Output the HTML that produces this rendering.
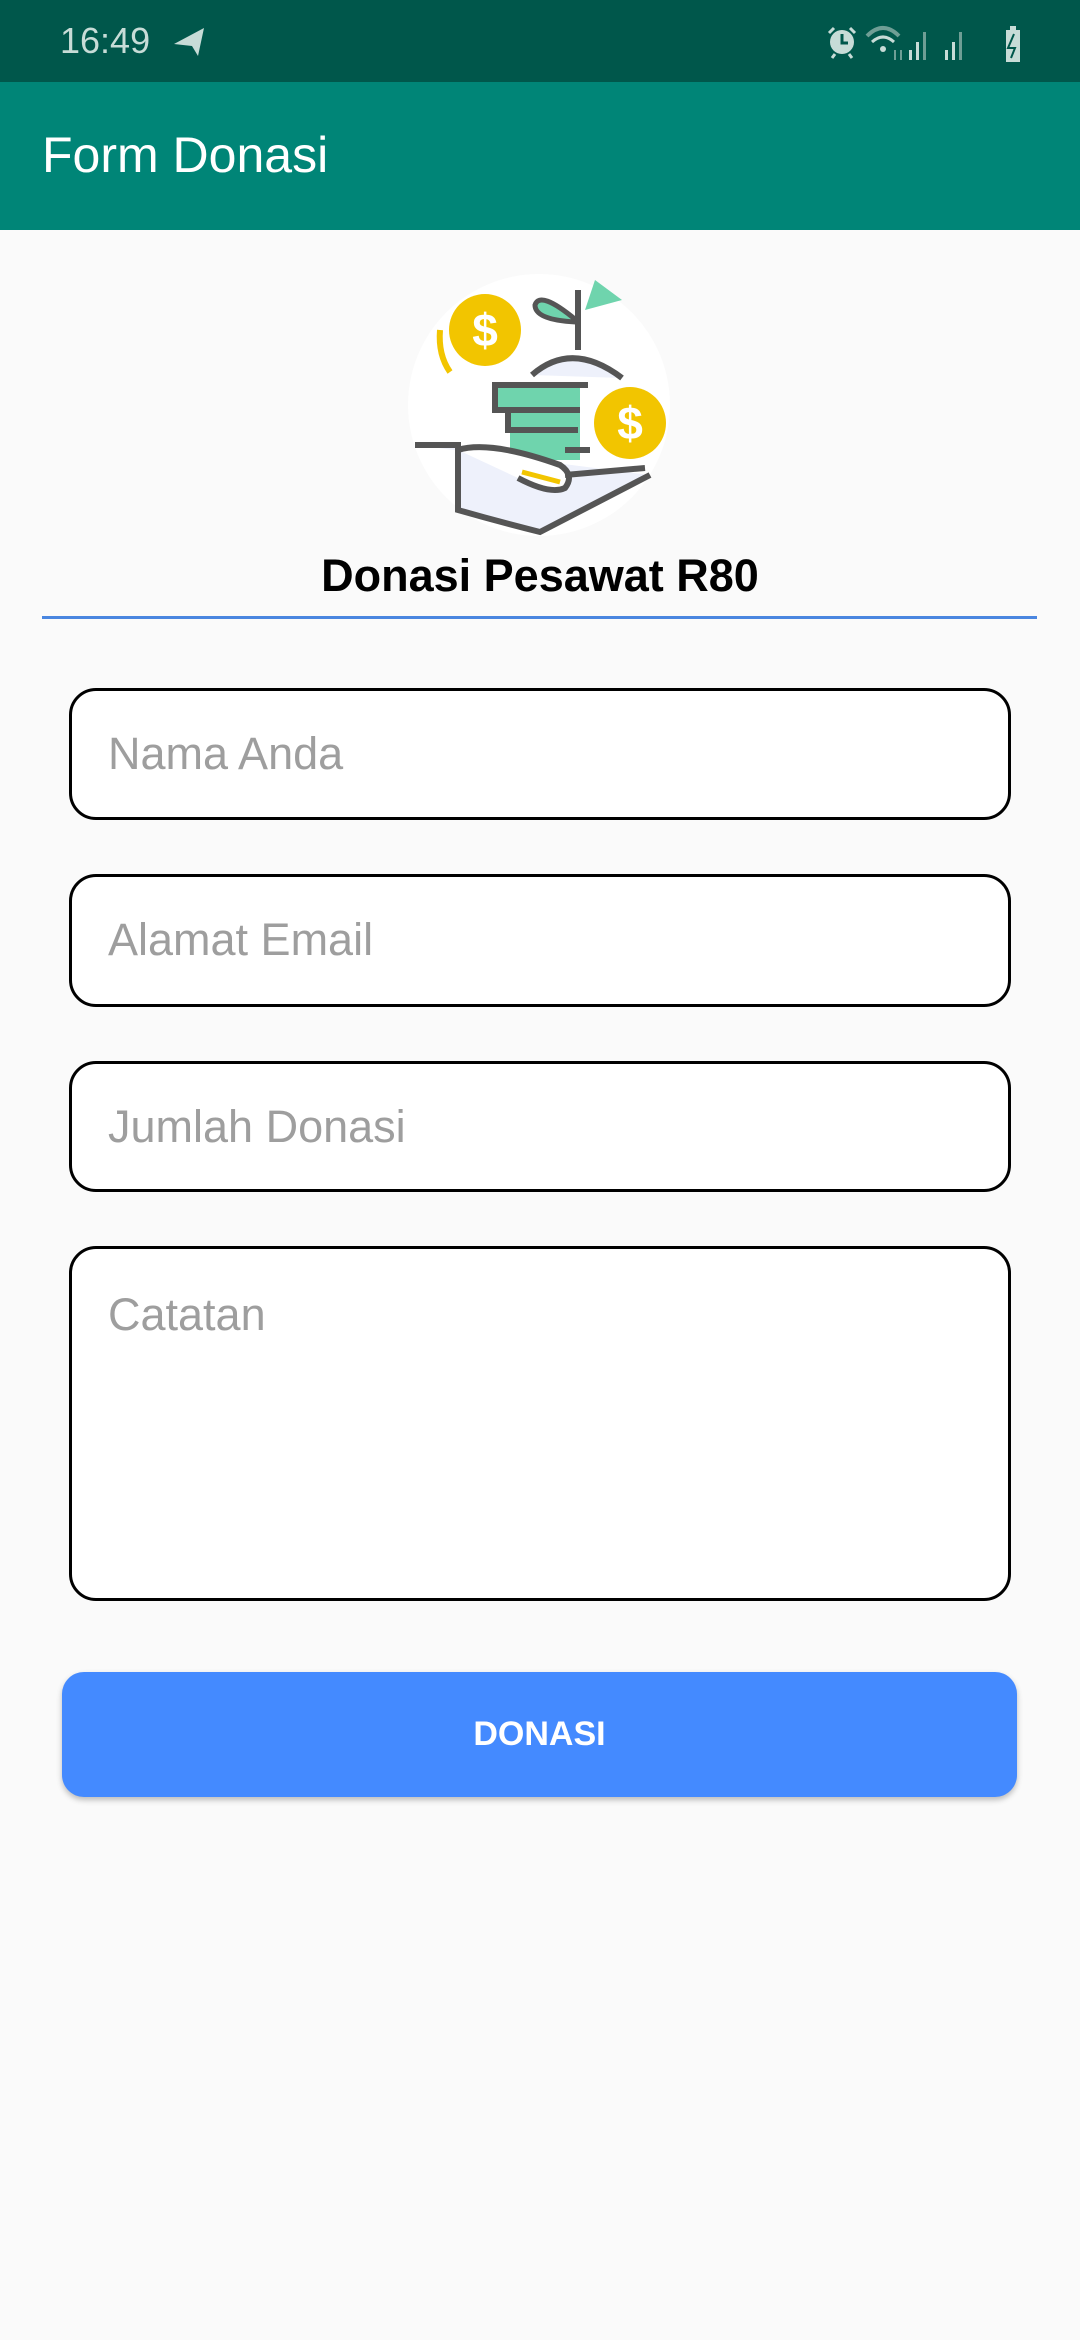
<!DOCTYPE html>
<html><head><meta charset="utf-8"><style>
*{margin:0;padding:0;box-sizing:border-box}
body{width:1080px;height:2340px;background:#fafafa;position:relative;overflow:hidden;font-family:"Liberation Sans",sans-serif}
.sb{position:absolute;left:0;top:0;width:1080px;height:82px;background:#00574b}
.ab{position:absolute;left:0;top:82px;width:1080px;height:148px;background:#008577}
.t{position:absolute;color:#fff;font-size:50px;left:42px;top:126px;line-height:58px}
.in{position:absolute;left:69px;width:942px;border:3px solid #000;border-radius:27px;background:#fff}
.ph{position:absolute;left:36px;color:#9e9e9e;font-size:45px;line-height:52px}
</style></head><body>
<div class="sb">
<div style="position:absolute;left:60px;top:20px;color:#c7dcd7;font-size:36px;line-height:42px">16:49</div>
<svg style="position:absolute;left:170px;top:24px" width="40" height="36" viewBox="0 0 40 36"><path d="M4 20 L34 4 L28 32 L22 22 Z" fill="#c7dcd7"/></svg>
<svg style="position:absolute;left:823px;top:20px" width="205" height="44" viewBox="0 0 205 44">
<circle cx="19" cy="22" r="12" fill="#c7dcd7"/><path d="M19 14 V23 H25" stroke="#00574b" stroke-width="3" fill="none"/>
<path d="M11 8 L6 13 M27 8 L32 13 M12 34 L9 38 M26 34 L29 38" stroke="#c7dcd7" stroke-width="3"/>
<path d="M44 16 Q60 0 76 16" stroke="#6f9e95" stroke-width="4" fill="none"/><path d="M49 22 Q60 12 71 22" stroke="#c7dcd7" stroke-width="3" fill="none"/><circle cx="60" cy="29" r="3" fill="#c7dcd7"/>
<path d="M72 30 V40 M78 30 V40" stroke="#6f9e95" stroke-width="2"/>
<rect x="86" y="30" width="3" height="10" fill="#c7dcd7"/><rect x="93" y="22" width="3" height="18" fill="#c7dcd7"/><rect x="100" y="12" width="3" height="28" fill="#6f9e95"/>
<rect x="122" y="30" width="3" height="10" fill="#c7dcd7"/><rect x="129" y="22" width="3" height="18" fill="#c7dcd7"/><rect x="136" y="12" width="3" height="28" fill="#6f9e95"/>
<rect x="183" y="10" width="14" height="32" fill="#c7dcd7"/><rect x="187" y="6" width="6" height="4" fill="#c7dcd7"/><path d="M191 14 L185 28 H192 L188 38" stroke="#00574b" stroke-width="2" fill="none"/>
</svg>
</div>
<div class="ab"></div>
<div class="t">Form Donasi</div>

<svg style="position:absolute;left:400px;top:260px" width="280" height="290" viewBox="0 0 280 290">
<circle cx="139" cy="145" r="131" fill="#fff"/>
<path d="M132 115 Q172 80 222 118" fill="#eef1fb" stroke="#555" stroke-width="6"/>
<path d="M178 90 V30" stroke="#555" stroke-width="6"/>
<path d="M176 60 Q140 30 135 45 Q135 60 176 62" fill="#6fd4ad" stroke="#555" stroke-width="5"/>
<path d="M185 50 L195 20 L222 40 Z" fill="#6fd4ad"/>
<rect x="95" y="125" width="85" height="25" fill="#6fd4ad"/><rect x="110" y="150" width="70" height="50" fill="#6fd4ad"/>
<path d="M92 125 H188 M95 125 V150 H180 M108 150 V170 H178 M165 190 H190" stroke="#555" stroke-width="6" fill="none"/>
<circle cx="85" cy="70" r="36" fill="#f2c500"/><text x="85" y="86" text-anchor="middle" font-size="46" font-weight="bold" fill="#fff" font-family="Liberation Sans">$</text>
<path d="M40 70 Q38 95 50 112" stroke="#f2c500" stroke-width="6" fill="none"/>
<circle cx="230" cy="163" r="36" fill="#f2c500"/><text x="230" y="179" text-anchor="middle" font-size="46" font-weight="bold" fill="#fff" font-family="Liberation Sans">$</text>
<path d="M15 185 H58 V250 Q100 262 140 272 L250 215" fill="#eef1fb" stroke="#555" stroke-width="6"/>
<path d="M58 190 Q90 180 160 205 Q175 215 165 228 Q150 235 118 218" fill="#fff" stroke="#555" stroke-width="6"/>
<path d="M165 215 L245 208" stroke="#555" stroke-width="6"/>
<path d="M122 212 L160 222" stroke="#f2c500" stroke-width="5"/>
</svg>

<div style="position:absolute;left:0;width:1080px;top:550px;text-align:center;font-weight:bold;font-size:45px;line-height:52px;color:#000">Donasi Pesawat R80</div>
<div style="position:absolute;left:42px;top:616px;width:995px;height:3px;background:#4a86e0"></div>

<div class="in" style="top:688px;height:132px"><div class="ph" style="top:37px">Nama Anda</div></div>
<div class="in" style="top:874px;height:133px"><div class="ph" style="top:37px">Alamat Email</div></div>
<div class="in" style="top:1061px;height:131px"><div class="ph" style="top:37px">Jumlah Donasi</div></div>
<div class="in" style="top:1246px;height:355px"><div class="ph" style="top:40px">Catatan</div></div>

<div style="position:absolute;left:62px;top:1672px;width:955px;height:125px;background:#448aff;border-radius:22px;box-shadow:0 3px 6px rgba(0,0,0,.25);color:#fff;font-weight:bold;font-size:34px;text-align:center;line-height:125px">DONASI</div>
</body></html>
